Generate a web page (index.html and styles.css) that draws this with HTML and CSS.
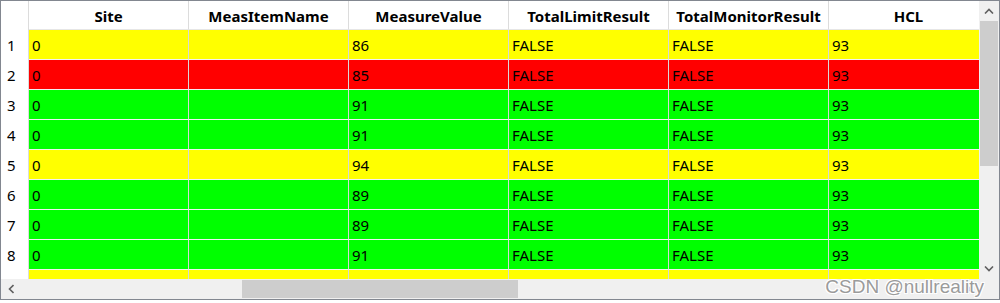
FILE: index.html
```html
<!DOCTYPE html>
<html>
<head>
<meta charset="utf-8">
<link rel="stylesheet" href="styles.css">
</head>
<body>
<div class="frame">
  <div class="main">
    <div class="viewport">
      <div class="grid">
        <div class="hc corner"></div>
        <div class="hc">Site</div>
        <div class="hc">MeasItemName</div>
        <div class="hc">MeasureValue</div>
        <div class="hc">TotalLimitResult</div>
        <div class="hc">TotalMonitorResult</div>
        <div class="hc">HCL</div>

        <div class="rh">1</div>
        <div class="c y">0</div><div class="c y"></div><div class="c y">86</div><div class="c y">FALSE</div><div class="c y">FALSE</div><div class="c y">93</div>

        <div class="rh">2</div>
        <div class="c r">0</div><div class="c r"></div><div class="c r">85</div><div class="c r">FALSE</div><div class="c r">FALSE</div><div class="c r">93</div>

        <div class="rh">3</div>
        <div class="c g">0</div><div class="c g"></div><div class="c g">91</div><div class="c g">FALSE</div><div class="c g">FALSE</div><div class="c g">93</div>

        <div class="rh">4</div>
        <div class="c g">0</div><div class="c g"></div><div class="c g">91</div><div class="c g">FALSE</div><div class="c g">FALSE</div><div class="c g">93</div>

        <div class="rh">5</div>
        <div class="c y">0</div><div class="c y"></div><div class="c y">94</div><div class="c y">FALSE</div><div class="c y">FALSE</div><div class="c y">93</div>

        <div class="rh">6</div>
        <div class="c g">0</div><div class="c g"></div><div class="c g">89</div><div class="c g">FALSE</div><div class="c g">FALSE</div><div class="c g">93</div>

        <div class="rh">7</div>
        <div class="c g">0</div><div class="c g"></div><div class="c g">89</div><div class="c g">FALSE</div><div class="c g">FALSE</div><div class="c g">93</div>

        <div class="rh">8</div>
        <div class="c g">0</div><div class="c g"></div><div class="c g">91</div><div class="c g">FALSE</div><div class="c g">FALSE</div><div class="c g">93</div>

        <div class="rh"></div>
        <div class="c y"></div><div class="c y"></div><div class="c y"></div><div class="c y"></div><div class="c y"></div><div class="c y"></div>
      </div>
    </div>
    <div class="vscroll">
      <div class="arrow"><svg width="10" height="6" viewBox="0 0 10 6"><path d="M1 5.5 L5 1.5 L9 5.5" fill="none" stroke="#606060" stroke-width="1.6"/></svg></div>
      <div class="vthumb"></div>
      <div class="vtrack"></div>
      <div class="arrow"><svg width="10" height="6" viewBox="0 0 10 6"><path d="M1 0.5 L5 4.5 L9 0.5" fill="none" stroke="#606060" stroke-width="1.6"/></svg></div>
    </div>
  </div>
  <div class="bottom">
    <div class="hscroll">
      <div class="harrow"><svg width="6" height="10" viewBox="0 0 6 10"><path d="M5.5 1 L1.5 5 L5.5 9" fill="none" stroke="#606060" stroke-width="1.6"/></svg></div>
      <div class="hgap"></div>
      <div class="hthumb"></div>
      <div class="htrack"></div>
      <div class="harrow"><svg width="6" height="10" viewBox="0 0 6 10"><path d="M0.5 1 L4.5 5 L0.5 9" fill="none" stroke="#606060" stroke-width="1.6"/></svg></div>
    </div>
    <div class="sq"></div>
  </div>
  <div class="watermark">CSDN @nullreality</div>
</div>
</body>
</html>
```
FILE: styles.css
```css
* { box-sizing: border-box; }
html, body { margin: 0; padding: 0; background: #ffffff; }
body { font-family: "Noto Sans", "Liberation Sans", sans-serif; }

.frame {
  position: relative;
  width: 1000px;
  height: 300px;
  border: 1px solid #828790;
  display: flex;
  flex-direction: column;
  background: #ffffff;
}

.main { display: flex; height: 278px; }
.viewport { width: 978px; height: 278px; overflow: hidden; }

.grid {
  display: grid;
  grid-template-columns: 28px repeat(5, 160px) 160px;
  grid-template-rows: 29px;
  grid-auto-rows: 30px;
  width: 1116px;
}

.hc {
  background: #ffffff;
  border-right: 1px solid #dcdcdc;
  border-bottom: 1px solid #e6e6e6;
  font-weight: 700;
  font-size: 15px;
  color: #000;
  display: flex;
  align-items: center;
  justify-content: center;
  padding-top: 1px;
}
.hc.corner { border-bottom: none; }

.rh {
  background: #ffffff;
  border-right: 1px solid #dcdcdc;
  font-size: 15px;
  color: #000;
  display: flex;
  align-items: center;
  padding-left: 6px;
}

.c {
  border-right: 1px solid #d8d8d8;
  border-bottom: 1px solid #f2f2f2;
  font-size: 15px;
  color: #000;
  display: flex;
  align-items: center;
  padding-left: 3px;
  white-space: nowrap;
}
.y { background: #ffff00; }
.r { background: #ff0000; }
.g { background: #00ff00; }

.vscroll {
  width: 20px;
  height: 278px;
  background: #f0f0f0;
  display: flex;
  flex-direction: column;
}
.arrow {
  height: 20px;
  display: flex;
  align-items: center;
  justify-content: center;
}
.vthumb {
  height: 145px;
  margin: 0 1px;
  background: #cdcdcd;
}
.vtrack { flex: 1; }

.bottom { display: flex; height: 20px; }
.hscroll {
  width: 978px;
  background: #f0f0f0;
  display: flex;
  align-items: stretch;
}
.harrow {
  width: 20px;
  display: flex;
  align-items: center;
  justify-content: center;
}
.hgap { width: 221px; }
.hthumb {
  width: 276px;
  margin: 1px 0;
  background: #cdcdcd;
}
.htrack { flex: 1; }
.sq { width: 20px; background: #f0f0f0; }

.watermark {
  position: absolute;
  right: 15px;
  bottom: 1px;
  font-family: "Liberation Sans", sans-serif;
  font-size: 19px;
  color: #9b9b9b;
  text-shadow: 0 0 1px #fff, 1px 1px 0 #fff, -1px -1px 0 #fff, 1px -1px 0 #fff, -1px 1px 0 #fff;
  white-space: nowrap;
}
```
